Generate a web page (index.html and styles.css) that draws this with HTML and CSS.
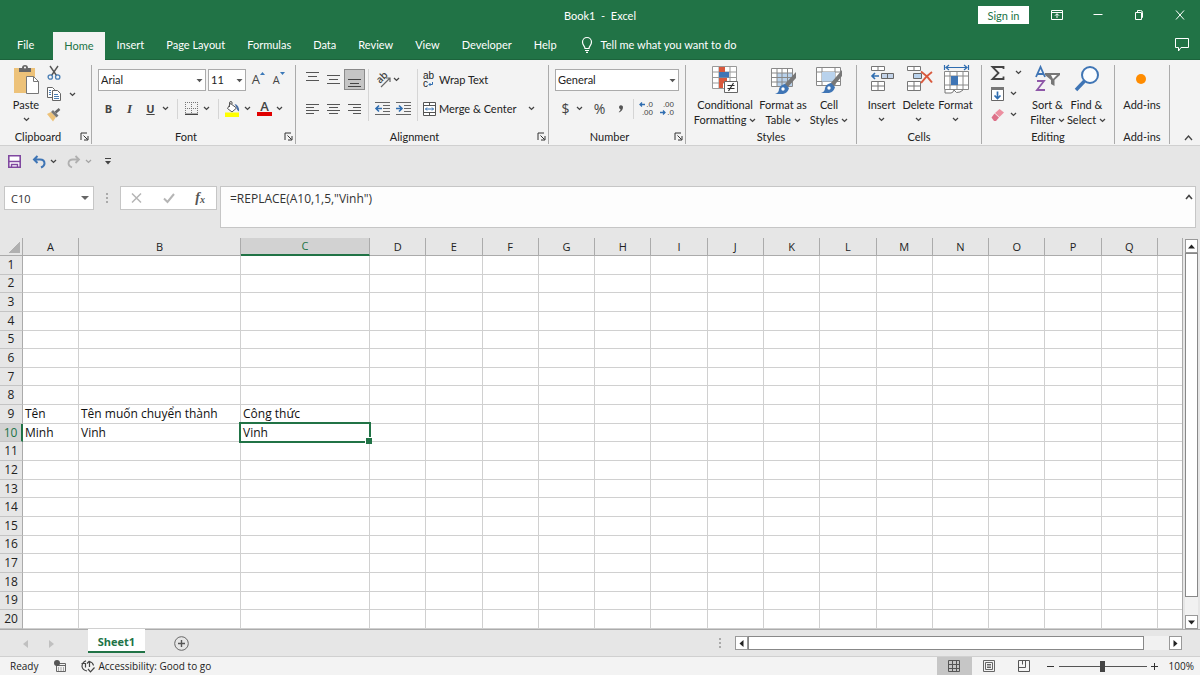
FILE: index.html
```html
<!DOCTYPE html>
<html lang="en">
<head>
    <meta charset="UTF-8">
    <meta name="viewport" content="width=device-width, initial-scale=1.0">
    <title>Book1 - Excel</title>
    <link rel="stylesheet" href="styles.css">
</head>
<body>
    <svg class="sprite" aria-hidden="true">
        <symbol id="chev" viewBox="0 0 7 5"><path d="M1 1l2.500 2.400L6 1" fill="none" stroke="#444" stroke-width="1.300"/></symbol>
        <symbol id="tri" viewBox="0 0 7 5"><path d="M0.500 1h6L3.500 4.200z" fill="#555"/></symbol>
        <symbol id="launch" viewBox="0 0 9 9"><path d="M1 8V1h6M3.500 3.500l4 4M8 4v4H4" fill="none" stroke="#333"/></symbol>
    </svg>

    <header class="titlebar">
        <h1>Book1&nbsp; -&nbsp; Excel</h1>
        <div class="window-buttons">
            <button class="sign-in">Sign in</button>
            <button class="win" aria-label="Ribbon display options"><svg width="12" height="10" viewBox="0 0 12 10"><path d="M.5.5h11v9H.5zM.5 2.500h11M6 8V4M4 5.700l2-2 2 2" fill="none" stroke="#fff"/></svg></button>
            <button class="win" aria-label="Minimize"><svg width="10" height="10" viewBox="0 0 10 10"><path d="M.5 4.500h9" stroke="#fff"/></svg></button>
            <button class="win" aria-label="Restore"><svg width="10" height="10" viewBox="0 0 10 10"><path d="M1.500 2.500h6v7h-6zM3.500 2.500V.5h3q2 0 2 2v5h-1" fill="none" stroke="#fff"/></svg></button>
            <button class="win" aria-label="Close"><svg width="10" height="10" viewBox="0 0 10 10"><path d="M1 .5l8 9M9 .5l-8 9" stroke="#fff"/></svg></button>
        </div>
    </header>

    <nav class="tabs">
        <button class="tab file">File</button>
        <button class="tab active">Home</button>
        <button class="tab">Insert</button>
        <button class="tab">Page Layout</button>
        <button class="tab">Formulas</button>
        <button class="tab">Data</button>
        <button class="tab">Review</button>
        <button class="tab">View</button>
        <button class="tab">Developer</button>
        <button class="tab">Help</button>
        <button class="tab tell-me">
            <svg width="12" height="16" viewBox="0 0 12 16"><path d="M4 11.500C4 9 1.500 8.500 1.500 5a4.500 4.500 0 0 1 9 0C10.500 8.500 8 9 8 11.500zM4 13.500h4M5 15.300h2" fill="none" stroke="#fff" stroke-width="1.200"/></svg>
            Tell me what you want to do
        </button>
        <button class="tab comments" aria-label="Comments"><svg width="14" height="14" viewBox="0 0 14 14"><path d="M.5.5h13v9H6L3.500 13V9.500h-3z" fill="none" stroke="#fff"/></svg></button>
    </nav>

    <main class="ribbon">
        <section class="group clipboard">
            <div class="tools">
                <button class="big">
                    <svg width="28" height="30" viewBox="0 0 28 30"><path d="M2 3h21v25H2z" fill="#edc279"/><path d="M7 7V3h3q0-3 3-3t3 3h3v4z" fill="#666"/><circle cx="13" cy="2.500" r="1" fill="#fff"/><path d="M14.500 11.500h7l5 5v12h-12z" fill="#fff" stroke="#777"/><path d="M21.500 11.500v5h5" fill="none" stroke="#777"/></svg>
                    <span>Paste</span>
                    <svg class="chev"><use href="#chev"/></svg>
                </button>
                <div class="stack">
                    <button aria-label="Cut"><svg width="14" height="14" viewBox="0 0 14 14"><path d="M3 0l6.500 9.500M11 0L4.500 9.500" stroke="#555" stroke-width="1.400"/><circle cx="3.300" cy="11" r="2.200" fill="none" stroke="#4a7fb5" stroke-width="1.300"/><circle cx="10.700" cy="11" r="2.200" fill="none" stroke="#4a7fb5" stroke-width="1.300"/></svg></button>
                    <button aria-label="Copy"><svg width="14" height="14" viewBox="0 0 14 14"><path d="M.5.500h5l2 2v8h-7z" fill="#fff" stroke="#666"/><path d="M5.500 3.500h5l3 3v7h-8z" fill="#fff" stroke="#666"/><path d="M2 3.500h2M2 5.500h2M2 7.500h2M7 7.500h4M7 9.500h5M7 11.500h5" stroke="#4a7fb5"/></svg></button>
                    <button aria-label="Format Painter"><svg width="14" height="14" viewBox="0 0 14 14"><path d="M0 6l4-2 5 5-3 4.500z" fill="#edc279"/><path d="M4 4l2-2 5.500 5.500-2 2z" fill="#777"/><path d="M8.500 4.500L12.500 1" stroke="#666" stroke-width="2.500"/></svg></button>
                </div>
                <svg class="chev copy-more"><use href="#chev"/></svg>
            </div>
            <h2>Clipboard</h2>
            <button class="launcher" aria-label="Clipboard settings"><svg><use href="#launch"/></svg></button>
        </section>

        <section class="group font">
            <div class="tools rows">
                <div class="row">
                    <div class="combo name"><select aria-label="Font"><option>Arial</option></select><svg><use href="#tri"/></svg></div>
                    <div class="combo size"><select aria-label="Font size"><option>11</option></select><svg><use href="#tri"/></svg></div>
                    <button class="ico grow" aria-label="Increase font size"><span>A</span><svg width="5" height="3"><path d="M0 3L2.500 0 5 3z" fill="#3b78b8"/></svg></button>
                    <button class="ico grow shrink" aria-label="Decrease font size"><span>A</span><svg width="5" height="3"><path d="M0 0h5L2.500 3z" fill="#3b78b8"/></svg></button>
                </div>
                <div class="row">
                    <button class="ico bold">B</button>
                    <button class="ico italic">I</button>
                    <button class="ico under">U</button>
                    <svg class="chev"><use href="#chev"/></svg>
                    <i class="sep"></i>
                    <button class="ico" aria-label="Borders"><svg width="13" height="13" viewBox="0 0 13 13"><path d="M.5 0v11M6.500 0v11M12.500 0v11M0 .5h13M0 6.500h13" stroke="#777" stroke-dasharray="1 1"/><path d="M0 12.300h13" stroke="#444" stroke-width="1.400"/></svg></button>
                    <svg class="chev"><use href="#chev"/></svg>
                    <i class="sep"></i>
                    <button class="ico" aria-label="Fill color"><svg width="15" height="16" viewBox="0 0 15 16"><path d="M5.500 2.500l6 4.500-4.500 4-4.500-3.500z" fill="#fff" stroke="#555"/><path d="M4.500 6V2q0-1.500 1.500-1.500T7 3" fill="none" stroke="#555"/><path d="M9.500 3q5 1 4.500 7.500Q11.500 9 11.500 6.500z" fill="#4a6fa5"/><path d="M0 11.500h14V16H0z" fill="#ffff00"/></svg></button>
                    <svg class="chev"><use href="#chev"/></svg>
                    <button class="ico font-color" aria-label="Font color">A</button>
                    <svg class="chev"><use href="#chev"/></svg>
                </div>
            </div>
            <h2>Font</h2>
            <button class="launcher" aria-label="Font settings"><svg><use href="#launch"/></svg></button>
        </section>

        <section class="group alignment">
            <div class="tools">
                <div class="rows">
                    <div class="row">
                        <button class="ico" aria-label="Top align"><svg width="13" height="16"><path d="M0 .5h13M2 4.500h9M0 8.500h13" stroke="#555"/></svg></button>
                        <button class="ico" aria-label="Middle align"><svg width="13" height="16"><path d="M0 3.500h13M2 7.500h9M0 11.500h13" stroke="#555"/></svg></button>
                        <button class="ico pressed" aria-label="Bottom align"><svg width="13" height="16"><path d="M0 7.500h13M2 11.500h9M0 14.500h13" stroke="#444"/></svg></button>
                    </div>
                    <div class="row">
                        <button class="ico" aria-label="Align left"><svg width="13" height="11"><path d="M0 1.500h13M0 4.500h8M0 7.500h13M0 10.500h8" stroke="#555"/></svg></button>
                        <button class="ico" aria-label="Center"><svg width="13" height="11"><path d="M0 1.500h13M2 4.500h9M0 7.500h13M2 10.500h9" stroke="#555"/></svg></button>
                        <button class="ico" aria-label="Align right"><svg width="13" height="11"><path d="M0 1.500h13M5 4.500h8M0 7.500h13M5 10.500h8" stroke="#555"/></svg></button>
                    </div>
                </div>
                <i class="sep tall"></i>
                <div class="rows">
                    <div class="row">
                        <button class="ico" aria-label="Orientation"><svg width="16" height="15" viewBox="0 0 16 15"><text font-size="10" font-family="Open Sans, sans-serif" font-weight="600" fill="#444" transform="translate(5 12) rotate(-45)">ab</text><path d="M6 15l8.500-8.500M11 6h4v4" fill="none" stroke="#666" stroke-width="1.200"/></svg></button>
                        <svg class="chev"><use href="#chev"/></svg>
                    </div>
                    <div class="row">
                        <button class="ico" aria-label="Decrease indent"><svg width="15" height="13"><path d="M0 .5h15M8 3.500h7M8 6.500h7M8 9.500h7M0 12.500h15" stroke="#666"/><path d="M7 6.500H1M4 3.500l-3 3 3 3" fill="none" stroke="#2f6db0" stroke-width="1.600"/></svg></button>
                        <button class="ico" aria-label="Increase indent"><svg width="15" height="13"><path d="M0 .5h15M8 3.500h7M8 6.500h7M8 9.500h7M0 12.500h15" stroke="#666"/><path d="M0 6.500h6M3 3.500l3 3-3 3" fill="none" stroke="#2f6db0" stroke-width="1.600"/></svg></button>
                    </div>
                </div>
                <i class="sep tall"></i>
                <div class="rows wide">
                    <div class="row">
                        <button class="labelled"><span class="wrap-icon">ab<br>c<svg width="5" height="5"><path d="M4.500 0v2.500H1M2.500 1L1 2.500 2.500 4" fill="none" stroke="#2f6db0"/></svg></span>Wrap Text</button>
                    </div>
                    <div class="row">
                        <button class="labelled"><svg width="13" height="14" viewBox="0 0 13 14"><path d="M.5.5h12v13H.5zM.5 3.500h12M.5 10.500h12M6.500 .5v3M6.500 10.500v3" fill="#fff" stroke="#555"/><path d="M2.500 7h8M4 5.500L2.500 7 4 8.500M9 5.500L10.500 7 9 8.500" fill="none" stroke="#2f6db0"/></svg>Merge &amp; Center</button>
                        <svg class="chev"><use href="#chev"/></svg>
                    </div>
                </div>
            </div>
            <h2>Alignment</h2>
            <button class="launcher" aria-label="Alignment settings"><svg><use href="#launch"/></svg></button>
        </section>

        <section class="group number">
            <div class="tools rows">
                <div class="row">
                    <div class="combo format"><select aria-label="Number format"><option>General</option></select><svg><use href="#tri"/></svg></div>
                </div>
                <div class="row">
                    <button class="ico sign">$</button>
                    <svg class="chev"><use href="#chev"/></svg>
                    <button class="ico sign percent">%</button>
                    <button class="ico" aria-label="Comma style"><svg width="6" height="8" viewBox="0 0 6 8"><path d="M2 4a2 2 0 1 1 3-2Q5 5.500 1 7.500L.8 7Q2.700 5.500 2.500 4z" fill="#555"/></svg></button>
                    <i class="sep"></i>
                    <button class="ico decimal" aria-label="Increase decimal">.0<br>.00<svg width="6" height="5"><path d="M6 2.500H1M3 .5l-2 2 2 2" fill="none" stroke="#2f6db0" stroke-width="1.300"/></svg></button>
                    <button class="ico decimal less" aria-label="Decrease decimal">.00<br>.0<svg width="6" height="5"><path d="M0 2.500h5M3 .5l2 2-2 2" fill="none" stroke="#2f6db0" stroke-width="1.300"/></svg></button>
                </div>
            </div>
            <h2>Number</h2>
            <button class="launcher" aria-label="Number settings"><svg><use href="#launch"/></svg></button>
        </section>

        <section class="group styles">
            <div class="tools">
                <button class="big">
                    <svg width="28" height="30" viewBox="0 0 28 30"><path d="M1.500 1.500h24v22h-24zM1.500 7h24M1.500 12.500h24M1.500 18h24M8 1.500v22M19 1.500v22" fill="#fff" stroke="#999"/><path d="M8 2h6v5H8zM8 13h8v5H8zM8 18h4v5H8z" fill="#d9593d"/><path d="M8 7h10v5.500H8z" fill="#3f75b5"/><path d="M13.500 16.500h13v11h-13z" fill="#fff" stroke="#666"/><path d="M16.500 20.500h7M16.500 23.500h7M22.500 18l-5 8" stroke="#333" stroke-width="1.200"/></svg>
                    <span>Conditional<br>Formatting <svg class="chev"><use href="#chev"/></svg></span>
                </button>
                <button class="big">
                    <svg width="28" height="30" viewBox="0 0 28 30"><path d="M2.500 3.500h21v18h-21z" fill="#fff"/><path d="M8 8h15v13H8z" fill="#b9d2ec"/><path d="M2.500 3.500h21v18h-21zM2.500 8h21M2.500 12.500h21M2.500 17h21M8 3.500v18M13 3.500v18M18.500 3.500v18" fill="none" stroke="#888"/><path d="M27 7v6l-9 10-3-3z" fill="#777"/><path d="M16 19l4 4q-1 5-6 6H6q4-1 4-5 1-4 6-5z" fill="#3f75b5"/><circle cx="14" cy="24" r="1.700" fill="#fff"/></svg>
                    <span>Format as<br>Table <svg class="chev"><use href="#chev"/></svg></span>
                </button>
                <button class="big">
                    <svg width="28" height="30" viewBox="0 0 28 30"><path d="M1.500 2.500h24v18h-24zM1.500 7h24M1.500 16.500h24M7 2.500v18M20 2.500v18" fill="#fff" stroke="#888"/><path d="M7 7h13v9.500H7z" fill="#b9d2ec"/><path d="M27 5v6l-9 11-3-3z" fill="#777"/><path d="M16 18l4 4q-1 5-6 6H6q4-1 4-5 1-4 6-5z" fill="#3f75b5"/><circle cx="14" cy="23" r="1.700" fill="#fff"/></svg>
                    <span>Cell<br>Styles <svg class="chev"><use href="#chev"/></svg></span>
                </button>
            </div>
            <h2>Styles</h2>
        </section>

        <section class="group cells">
            <div class="tools">
                <button class="big">
                    <svg width="28" height="30" viewBox="0 0 28 30"><path d="M3.500 1.500h13v4h-13zM10 1.500v4M3.500 16.500h13v9h-13zM3.500 21h13M10 16.500v9" fill="#fff" stroke="#777"/><path d="M13.500 8.500h12v5h-12zM19.500 8.500v5" fill="#c3d3e8" stroke="#666"/><path d="M11 11H4.500M7 8l-3 3 3 3" fill="none" stroke="#2f6db0" stroke-width="1.600"/></svg>
                    <span>Insert</span>
                    <svg class="chev"><use href="#chev"/></svg>
                </button>
                <button class="big">
                    <svg width="28" height="30" viewBox="0 0 28 30"><path d="M2.500 1.500h13v4h-13zM9 1.500v4M2.500 16.500h13v9h-13zM2.500 21h13M9 16.500v9" fill="#fff" stroke="#777"/><path d="M8.500 8.500h8v5h-8z" fill="#b9d2ec" stroke="#666"/><path d="M16 6.500q6 4 11 11M27 7q-6 4-11 11" fill="none" stroke="#d9593d" stroke-width="2"/></svg>
                    <span>Delete</span>
                    <svg class="chev"><use href="#chev"/></svg>
                </button>
                <button class="big">
                    <svg width="28" height="30" viewBox="0 0 28 30"><path d="M2.500 6.500h24v18h-24zM2.500 11h24M2.500 20h24M8 6.500v18M15 6.500v18M21 6.500v18" fill="#fff" stroke="#888"/><path d="M9 11h7v9H9z" fill="#3f75b5"/><path d="M2.500 0v5M26.500 0v5M4 2.500h21M7 0L4 2.500 7 5M22 0l3 2.500L22 5" fill="none" stroke="#2f6db0" stroke-width="1.200"/><path d="M3 25v3h6q2 0 3-3 2 4 6 2l3-2" fill="#fff" stroke="#777"/></svg>
                    <span>Format</span>
                    <svg class="chev"><use href="#chev"/></svg>
                </button>
            </div>
            <h2>Cells</h2>
        </section>

        <section class="group editing">
            <div class="tools">
                <div class="stack">
                    <button aria-label="AutoSum"><svg width="14" height="14" viewBox="0 0 14 14"><path d="M12.500 3V1H1.500L7.500 7l-6 6h11v-2.500" fill="none" stroke="#444" stroke-width="1.800"/></svg><svg class="chev far"><use href="#chev"/></svg></button>
                    <button aria-label="Fill"><svg width="13" height="14" viewBox="0 0 13 14"><path d="M.5.500h12v13H.5z" fill="#fff" stroke="#666"/><path d="M0 0h13v3H0z" fill="#777"/><path d="M6.500 4.500v7M3.500 8.500l3 3 3-3" fill="none" stroke="#2f6db0" stroke-width="1.700"/></svg><svg class="chev"><use href="#chev"/></svg></button>
                    <button aria-label="Clear"><svg width="13" height="12" viewBox="0 0 13 12"><path d="M8.500 0L13 3.500 8.500 8 4 4z" fill="#ec8fa0"/><path d="M3.500 4.500L8 8.500 5 12H3L.5 8.500z" fill="#dd7088"/></svg><svg class="chev"><use href="#chev"/></svg></button>
                </div>
                <button class="big">
                    <svg width="28" height="30" viewBox="0 0 28 30"><path d="M2 12L6.500 2 11 12M3.500 9h6" fill="none" stroke="#3f75b5" stroke-width="1.800"/><path d="M3 16h7L3 25h8" fill="none" stroke="#8e57a8" stroke-width="1.800"/><path d="M11 8h15v2l-5.500 5v6L17 19v-4l-6-5z" fill="#777"/><path d="M17 10h6l-4 4" fill="#fff"/></svg>
                    <span>Sort &amp;<br>Filter <svg class="chev"><use href="#chev"/></svg></span>
                </button>
                <button class="big">
                    <svg width="28" height="30" viewBox="0 0 28 30"><circle cx="17" cy="10" r="8" fill="#fafcff" stroke="#3f75b5" stroke-width="2"/><path d="M11.500 16L3 25" stroke="#3f75b5" stroke-width="3.500"/></svg>
                    <span>Find &amp;<br>Select <svg class="chev"><use href="#chev"/></svg></span>
                </button>
            </div>
            <h2>Editing</h2>
        </section>

        <section class="group addins">
            <div class="tools">
                <button class="big">
                    <svg width="28" height="30" viewBox="0 0 28 30"><circle cx="13" cy="14" r="5" fill="#ff8c00"/></svg>
                    <span>Add-ins</span>
                </button>
            </div>
            <h2>Add-ins</h2>
        </section>
        <button class="collapse" aria-label="Collapse the ribbon"><svg width="9" height="6"><path d="M1 5l3.500-4L8 5" fill="none" stroke="#444" stroke-width="1.300"/></svg></button>
    </main>

    <div class="quick">
        <button aria-label="Save"><svg width="13" height="13" viewBox="0 0 13 13"><path d="M.8.8h11.400v11.400H.8z" fill="#fff" stroke="#8048a0" stroke-width="1.600"/><path d="M1 6.500h11M3.500 12V9.500h6V12" fill="none" stroke="#8048a0" stroke-width="1.400"/></svg></button>
        <button class="undo" aria-label="Undo"><svg width="14" height="13" viewBox="0 0 14 13"><path d="M5.500 1L2 4.500 5.500 8M2 4.500h6q4.500 0 4.500 4Q12.500 11 9 12.500" fill="none" stroke="#3f75b5" stroke-width="2"/></svg><svg class="chev"><use href="#chev"/></svg></button>
        <button class="redo" aria-label="Redo" disabled><svg width="14" height="13" viewBox="0 0 14 13"><path d="M8.500 1L12 4.500 8.500 8M12 4.500H6q-4.500 0-4.500 4Q1.500 11 5 12.500" fill="none" stroke="#b0b0b0" stroke-width="1.800"/></svg><svg class="chev"><use href="#chev"/></svg></button>
        <button class="customise" aria-label="Customize Quick Access Toolbar"><svg width="6" height="7"><path d="M0 .5h6" stroke="#444"/><path d="M0 3h6L3 6.500z" fill="#444"/></svg></button>
    </div>

    <div class="formula-bar">
        <div class="name-box"><input type="text" value="C10" aria-label="Name box"><svg width="9" height="6"><path d="M0 1h8L4 5z" fill="#666"/></svg></div>
        <i class="dots"></i>
        <div class="fx">
            <button aria-label="Cancel"><svg width="11" height="10"><path d="M1 .5l9 9M10 .5l-9 9" stroke="#b5b5b5" stroke-width="1.500"/></svg></button>
            <button aria-label="Enter"><svg width="12" height="10"><path d="M1 5.500L4.500 9 11 1" fill="none" stroke="#b5b5b5" stroke-width="2"/></svg></button>
            <button class="insert-fx" aria-label="Insert function">f<sub>x</sub></button>
        </div>
        <div class="formula">
            <textarea aria-label="Formula bar" spellcheck="false">=REPLACE(A10,1,5,"Vinh")</textarea>
            <svg width="8" height="6"><path d="M1 5l3-3.500L7 5" fill="none" stroke="#444" stroke-width="1.600"/></svg>
        </div>
    </div>

    <div class="sheet">
        <div class="grid-wrap">
            <table id="grid"></table>
        </div>
        <div class="vscroll">
            <button aria-label="Scroll up"><svg width="7" height="5"><path d="M0 4.500h7L3.500.5z" fill="#222"/></svg></button>
            <div class="track"><div class="thumb"></div></div>
            <button aria-label="Scroll down"><svg width="7" height="5"><path d="M0 .5h7L3.500 4.500z" fill="#222"/></svg></button>
        </div>
    </div>

    <div class="sheet-bar">
        <button class="nav" aria-label="Previous sheet"><svg width="5" height="8"><path d="M5 0v8L0 4z" fill="#c0c0c0"/></svg></button>
        <button class="nav" aria-label="Next sheet"><svg width="5" height="8"><path d="M0 0v8l5-4z" fill="#c0c0c0"/></svg></button>
        <button class="sheet-tab">Sheet1</button>
        <button class="add" aria-label="New sheet"><svg width="15" height="15"><circle cx="7.500" cy="7.500" r="6.800" fill="none" stroke="#666"/><path d="M4 7.500h7M7.500 4v7" stroke="#555" stroke-width="1.400"/></svg></button>
        <i class="dots"></i>
        <div class="hscroll">
            <button aria-label="Scroll left"><svg width="5" height="7"><path d="M4.500 0v7L.5 3.500z" fill="#222"/></svg></button>
            <div class="track"><div class="thumb"></div></div>
            <button aria-label="Scroll right"><svg width="5" height="7"><path d="M.5 0v7l4-3.500z" fill="#222"/></svg></button>
        </div>
    </div>

    <footer class="status">
        <span>Ready</span>
        <svg class="macro" width="12" height="12"><path d="M2.500 3.500h9v8h-9zM2 5.500h10M4 8h1M6.500 8h1M9 8h1M4 10h1M6.500 10h1M9 10h1" fill="none" stroke="#666"/><circle cx="3" cy="3" r="3" fill="#555"/></svg>
        <svg class="access" width="14" height="13" viewBox="0 0 14 13"><path d="M5 .8Q1 2.500 1 6.500q.5 3.500 5 4.500M.5 3.500h4v4M8.500 1.500q3.500 1 4 4M8.500 1v6M6 3.500l2.500-2.500M7 9l2.500 2.800L13.500 7.500" fill="none" stroke="#444" stroke-width="1.200"/></svg>
        <span>Accessibility: Good to go</span>
        <div class="views">
            <button class="on" aria-label="Normal"><svg width="12" height="12"><path d="M.5.500h11v11H.5zM.5 4.500h11M.5 8.500h11M4.500.5v11M8.500.5v11" fill="none" stroke="#555"/></svg></button>
            <button aria-label="Page layout"><svg width="12" height="12"><path d="M.5.500h11v11H.5zM2.500 2.500h7v7h-7zM4 4.500h4M4 6h4M4 7.500h4" fill="none" stroke="#666"/></svg></button>
            <button aria-label="Page break preview"><svg width="12" height="12"><path d="M.5.500h11v11H.5zM1 7.500h6.500V.5M4.500.5v4" fill="none" stroke="#555"/></svg></button>
        </div>
        <button class="zoom-btn" aria-label="Zoom out"><svg width="8" height="8"><path d="M0 4.500h7" stroke="#333"/></svg></button>
        <input type="range" aria-label="Zoom" min="0" max="100" value="50">
        <button class="zoom-btn" aria-label="Zoom in"><svg width="8" height="8"><path d="M0 4.500h7M3.500 1v7" stroke="#333"/></svg></button>
        <span class="percent-label">100%</span>
    </footer>

    <script>
        const columns = 'ABCDEFGHIJKLMNOPQ'.split('').concat('');
        const cells = {
            A9: 'Tên', B9: 'Tên muốn chuyển thành', C9: 'Công thức',
            A10: 'Minh', B10: 'Vinh', C10: 'Vinh'
        };
        const selected = { column: 'C', row: 10 };

        let html = '<thead><tr><th class="corner"></th>';
        columns.forEach(function(c) {
            const name = c === '' ? 'last' : 'col-' + c.toLowerCase();
            html += `<th class="${name}${c === selected.column ? ' selected' : ''}">${c}</th>`;
        });
        html += '</tr></thead><tbody>';

        for (let r = 1; r <= 20; r++) {
            html += `<tr><th class="${r === selected.row ? 'selected' : ''}">${r}</th>`;
            columns.forEach(function(c) {
                const active = c === selected.column && r === selected.row;
                html += `<td${active ? ' class="active-cell"' : ''}>${c && cells[c + r] || ''}</td>`;
            });
            html += '</tr>';
        }

        document.getElementById('grid').innerHTML = html + '</tbody>';
    </script>
</body>
</html>
```
FILE: styles.css
```css
* {
    box-sizing: border-box;
}

body {
    margin: 0;
    height: 100vh;
    display: flex;
    flex-direction: column;
    overflow: hidden;
    font-family: "Open Sans", "Noto Sans", sans-serif;
    font-size: 11px;
    line-height: 15px;
    color: #222;
    background-color: #e6e6e6;
}

button {
    border: none;
    padding: 0;
    background: none;
    color: inherit;
    font: inherit;
    white-space: nowrap;
}

svg {
    flex: none;
    overflow: visible;
}

.sprite {
    position: absolute;
    width: 0;
    height: 0;
}

.chev {
    width: 7px;
    height: 5px;
}

/* title bar and tabs */

.titlebar,
.tabs,
.ribbon {
    font-family: Lato, "Open Sans", sans-serif;
}

.titlebar {
    display: flex;
    justify-content: center;
    height: 32px;
    position: relative;
    background-color: #217346;
    color: #fff;
}

.titlebar h1 {
    margin: 0;
    font-size: 11px;
    font-weight: normal;
    line-height: 32px;
}

.window-buttons {
    position: absolute;
    right: 0;
    top: 0;
    display: flex;
    align-items: center;
    height: 30px;
}

.sign-in {
    width: 51px;
    height: 18px;
    margin-right: 7px;
    background-color: #fff;
    color: #217346;
}

.win {
    width: 41px;
    height: 28px;
}

.tabs {
    display: flex;
    height: 28px;
    padding-left: 6px;
    background-color: #217346;
    border-bottom: 1px solid #1c633c;
}

.tab {
    padding: 0 11px 2px;
    color: #fff;
}

.file {
    padding-right: 19px;
}

.tab.active {
    margin: 0 1px -1px 0;
    background-color: #f3f3f3;
    color: #217346;
}

.tell-me {
    display: flex;
    align-items: center;
    gap: 8px;
    padding-left: 13px;
}

.comments {
    display: flex;
    align-items: center;
    margin-left: auto;
}

/* ribbon */

.ribbon {
    display: flex;
    height: 86px;
    padding: 5px 0 1px;
    background-color: #f3f3f3;
    border-bottom: 1px solid #d0d0d0;
}

.group {
    position: relative;
    flex: none;
    display: flex;
    flex-direction: column;
    border-right: 1px solid #ababab;
}

.clipboard { width: 92px; }
.font { width: 204px; }
.alignment { width: 253px; }
.number { width: 137px; }
.styles { width: 171px; }
.cells { width: 125px; }
.editing { width: 133px; }
.addins { width: 55px; }

.group h2 {
    margin: 0;
    font-size: 11px;
    font-weight: normal;
    line-height: 15px;
    text-align: center;
}

.clipboard h2,
.font h2,
.alignment h2,
.number h2 {
    padding-right: 15px;
}

.launcher {
    position: absolute;
    right: 2px;
    bottom: 3px;
    width: 9px;
    height: 9px;
}

.launcher svg {
    display: block;
    width: 9px;
    height: 9px;
}

.tools {
    display: flex;
    flex: 1;
    padding: 0 6px;
}

.rows,
.tools.rows {
    display: flex;
    flex-direction: column;
    gap: 8px;
    padding-top: 4px;
}

.row {
    display: flex;
    align-items: center;
    height: 21px;
}

.big {
    display: flex;
    flex-direction: column;
    align-items: center;
    line-height: 15px;
}

.big > svg:first-child {
    margin-bottom: 2px;
}

.big > .chev {
    margin-top: 5px;
}

.big span .chev {
    vertical-align: 1px;
}

.stack {
    display: flex;
    flex-direction: column;
}

.stack button {
    display: flex;
    align-items: center;
    gap: 6px;
    height: 21px;
}

.clipboard .tools {
    padding: 0 0 0 12px;
}

.clipboard .stack {
    margin: -3px 0 0 7px;
}

.copy-more {
    margin: 27px 0 0 8px;
}

.ico {
    display: flex;
    align-items: center;
    justify-content: center;
    width: 21px;
    height: 21px;
    color: #444;
}

.sep {
    width: 1px;
    height: 20px;
    margin: 0 3px;
    background-color: #d5d5d5;
}

.sep.tall {
    height: 52px;
    margin-top: 4px;
}

.pressed {
    background-color: #c5c5c5;
    border: 1px solid #8a8a8a;
}

.combo {
    position: relative;
    flex: none;
    height: 22px;
    margin-right: 2px;
}

.combo select {
    width: 100%;
    height: 100%;
    padding: 0 2px;
    border: 1px solid #ababab;
    border-radius: 0;
    appearance: none;
    background-color: #fff;
    color: #222;
    font: inherit;
}

.combo svg {
    position: absolute;
    right: 3px;
    top: 9px;
    width: 7px;
    height: 5px;
    pointer-events: none;
}

.combo.name { width: 108px; }
.combo.size { width: 38px; }
.combo.format { width: 124px; }

.font .row:last-child .chev {
    margin: 0 5px 0 1px;
}

.grow {
    align-items: flex-start;
    font-family: "Open Sans", sans-serif;
    font-size: 13px;
    line-height: 21px;
}

.shrink {
    font-size: 11px;
}

.grow svg {
    margin-top: 3px;
}

.bold,
.under {
    font-family: "Open Sans", sans-serif;
    font-weight: bold;
}

.under {
    text-decoration: underline;
}

.italic {
    font-family: "Liberation Serif", serif;
    font-size: 13px;
    font-style: italic;
    font-weight: bold;
}

.font-color {
    width: 15px;
    height: 15px;
    margin: 0 3px 0 1px;
    border-bottom: 4px solid #e00000;
    font-family: "Open Sans", sans-serif;
    font-size: 13px;
    font-weight: 600;
    line-height: 11px;
}

.labelled {
    display: flex;
    align-items: center;
    gap: 3px;
    padding-left: 2px;
}

.wrap-icon {
    width: 13px;
    font-family: "Liberation Sans", sans-serif;
    font-size: 10px;
    line-height: 8px;
    text-align: left;
}

.wide .chev {
    margin-left: 12px;
}

.sign {
    font-family: "Open Sans", sans-serif;
    font-size: 14px;
}

.percent {
    margin-left: 6px;
}

.number .row:last-child .sep {
    margin: 0 2px;
}

.decimal {
    position: relative;
    display: block;
    padding-right: 4px;
    font-family: "Liberation Sans", sans-serif;
    font-size: 8px;
    line-height: 8px;
    text-align: right;
}

.decimal svg {
    position: absolute;
    left: 3px;
    top: 4px;
}

.less svg {
    top: 12px;
}

.styles .tools {
    padding: 0 8px;
}

.styles .big:nth-child(1) { width: 62px; }
.styles .big:nth-child(2) { width: 54px; }
.styles .big:nth-child(3) { width: 38px; }

.cells .big {
    width: 37px;
}

.editing .tools {
    padding: 0 8px 0 9px;
}

.editing .stack {
    margin: -3px auto 0 0;
}

.editing .big {
    width: 39px;
}

.far {
    margin-left: 4px;
}

.addins .tools {
    padding: 0;
    justify-content: center;
}

.collapse {
    margin: auto 7px 0 auto;
}

/* quick access */

.quick {
    display: flex;
    align-items: center;
    height: 31px;
    padding-left: 8px;
}

.quick button {
    display: flex;
    align-items: center;
    gap: 4px;
}

.undo {
    margin-left: 11px;
}

.redo {
    margin-left: 10px;
}

.redo .chev {
    opacity: 0.4;
}

.customise {
    margin-left: 13px;
}

/* formula bar */

.formula-bar {
    display: flex;
    align-items: flex-start;
    height: 61px;
    padding: 9px 4px 0;
}

.name-box {
    position: relative;
    width: 90px;
}

.name-box input {
    width: 100%;
    height: 24px;
    padding: 0 6px;
    border: 1px solid #c6c6c6;
    background-color: #fff;
    color: #333;
    font: inherit;
}

.name-box svg {
    position: absolute;
    right: 4px;
    top: 9px;
}

.dots {
    width: 2px;
    height: 10px;
    background: repeating-linear-gradient(#aaa 0 2px, transparent 2px 4px);
}

.formula-bar .dots {
    margin: 7px 12px 0;
}

.fx {
    display: flex;
    width: 97px;
    height: 24px;
    margin-right: 3px;
    border: 1px solid #c6c6c6;
    background-color: #fff;
}

.fx button {
    flex: 1;
}

.insert-fx {
    font-family: "Liberation Serif", serif;
    font-size: 14px;
    font-style: italic;
    font-weight: bold;
    color: #555;
}

.insert-fx sub {
    font-size: 10px;
    vertical-align: -1px;
}

.formula {
    position: relative;
    flex: 1;
    height: 42px;
}

.formula textarea {
    display: block;
    width: 100%;
    height: 100%;
    padding: 3px 9px;
    border: 1px solid #c6c6c6;
    resize: none;
    background-color: #fdfdfd;
    color: #333;
    font: inherit;
    font-size: 12px;
    line-height: 17px;
}

.formula svg {
    position: absolute;
    right: 3px;
    top: 8px;
}

/* grid */

.sheet {
    display: flex;
    flex: 1;
    min-height: 0;
    gap: 2px;
    padding-right: 2px;
    border-bottom: 1px solid #ababab;
}

.grid-wrap {
    flex: 1;
    min-width: 0;
}

#grid {
    width: 100%;
    height: 100%;
    table-layout: fixed;
    border-collapse: separate;
    border-spacing: 0;
    border-right: 1px solid #ababab;
    font-size: 12px;
    line-height: 16px;
}

#grid th,
#grid td {
    padding: 0 2px;
    border-right: 1px solid #d0d0d0;
    border-bottom: 1px solid #d0d0d0;
    white-space: nowrap;
}

#grid th {
    padding: 0;
    background-color: #e6e6e6;
    border-color: #ababab;
    font-size: 12px;
    font-weight: normal;
}

#grid thead th {
    height: 18px;
    font-size: 11px;
}

#grid tbody th {
    border-bottom-color: #c4c4c4;
}

#grid td {
    background-color: #fff;
    color: #111;
}

#grid .corner {
    width: 23px;
    background: linear-gradient(135deg, transparent 50%, #b0b0b0 50%) no-repeat 9px 4px / 11px 11px;
}

#grid .col-a { width: 56px; }
#grid .col-b { width: 162px; }
#grid .col-c { width: 129px; }
#grid .last { width: 24px; }

#grid .last,
#grid td:last-child {
    border-right: none;
}

#grid th.selected {
    background-color: #d2d2d2;
    color: #217346;
}

#grid thead .selected {
    border-bottom: 2px solid #217346;
}

#grid tbody .selected {
    border-right: 2px solid #217346;
}

#grid .active-cell {
    position: relative;
}

.active-cell::before {
    content: "";
    position: absolute;
    inset: -2px;
    border: 2px solid #217346;
}

.active-cell::after {
    content: "";
    position: absolute;
    right: -3px;
    bottom: -3px;
    width: 6px;
    height: 6px;
    border: 1px solid #fff;
    border-width: 1px 0 0 1px;
    background-color: #217346;
}

/* scrollbars */

.vscroll,
.hscroll {
    display: flex;
}

.vscroll {
    flex-direction: column;
    width: 13px;
    padding-top: 1px;
}

.vscroll button,
.hscroll button {
    display: flex;
    align-items: center;
    justify-content: center;
    width: 13px;
    height: 14px;
    border: 1px solid #999;
    background-color: #fff;
}

.track {
    flex: 1;
    background-color: #f1f1f1;
}

.thumb {
    border: 1px solid #888;
    background-color: #fff;
}

.vscroll .thumb {
    height: 95%;
}

.hscroll .thumb {
    width: 94%;
    height: 14px;
}

/* sheet bar */

.sheet-bar {
    display: flex;
    align-items: center;
    height: 26px;
    padding: 0 18px 0 23px;
}

.nav {
    width: 5px;
    margin-right: 21px;
}

.sheet-tab {
    align-self: flex-start;
    width: 57px;
    height: 24px;
    margin: -1px 29px 0 13px;
    padding-top: 2px;
    background-color: #fff;
    border-bottom: 2px solid #217346;
    color: #217346;
    font-size: 11px;
    font-weight: bold;
}

.add {
    display: flex;
}

.sheet-bar .dots {
    margin-left: auto;
}

.hscroll {
    width: 447px;
    margin-left: 14px;
}

/* status bar */

.status {
    display: flex;
    align-items: center;
    height: 19px;
    padding: 0 6px 0 10px;
    border-top: 1px solid #d0d0d0;
    background-color: #f3f3f3;
    font-size: 10px;
}

.macro {
    margin: 0 15px 0 16px;
}

.access {
    margin-right: 3px;
}

.status span + .views {
    margin-left: auto;
}

.views {
    display: flex;
    height: 100%;
    margin-right: 5px;
}

.views button {
    display: flex;
    align-items: center;
    justify-content: center;
    width: 35px;
}

.views .on {
    background-color: #c6c6c6;
}

.zoom-btn {
    display: flex;
}

.status input {
    width: 88px;
    height: 12px;
    margin: 0 4px;
    appearance: none;
    background: linear-gradient(#555, #555) no-repeat center / 100% 1px;
}

.status input::-webkit-slider-thumb {
    appearance: none;
    width: 5px;
    height: 11px;
    background-color: #444;
}

.percent-label {
    margin-left: 10px;
}
```
